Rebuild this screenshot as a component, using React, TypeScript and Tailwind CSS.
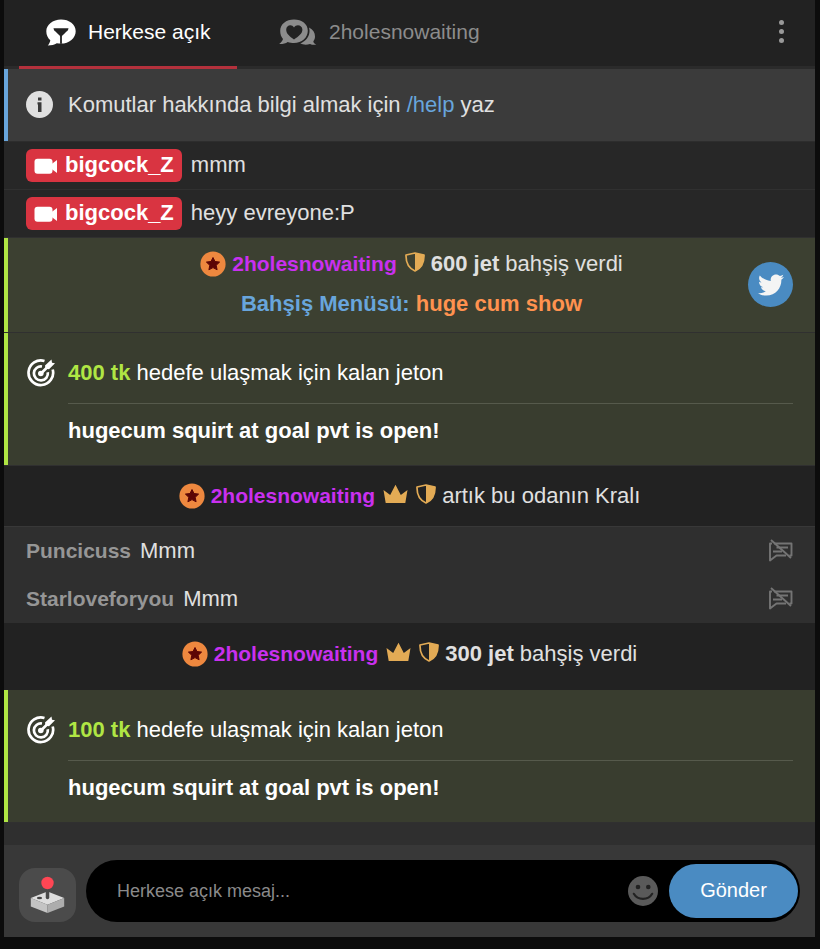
import React, { useState } from "react";
import { FaTwitter } from "react-icons/fa";

const USER = "2holesnowaiting";

function PublicIcon() {
  return (
    <svg viewBox="0 0 30 27" className="h-[27px] w-[30px] shrink-0" aria-hidden="true">
      <path
        fill="#fff"
        d="M15 .5C6.800.5.3 5.700.3 12.200c0 3.700 1.500 6.800 4 9-.2 1.700-1 3.500-2.500 5.300 3.700-.1 6.600-.9 9-2.300 1.300.3 2.800.4 4.200.4 8.200 0 14.700-5.500 14.700-12.400S23.200.5 15 .5Z"
      />
      <path fill="#222" d="M7.500 9.300h15c-.2 1.500-.8 2.500-2 3.300l-3 2.800c-.9.800-1.600 1.200-1.600 2.400v7h-1.800v-7c0-1.200-.7-1.600-1.600-2.400l-3-2.800c-1.200-.8-1.800-1.800-2-3.300Z" />
    </svg>
  );
}

function PrivateIcon() {
  return (
    <svg viewBox="0 0 38 27" className="h-[27px] w-[38px] shrink-0" fill="#8c8c8c" aria-hidden="true">
      <path
        fillRule="evenodd"
        d="M15 .5C7.200.5 1.200 5.200 1.200 11.800c0 3.500 1 6.200 2.800 8.200C3.500 21.800 2.300 23.500.2 25c3.200.2 6.300-.5 8.500-2 1.900.7 4.200 1 6.300 1 7.800 0 13.800-5.300 13.800-12.200S22.800.5 15 .5Zm0 20C10.500 17.500 7.200 14.500 7.200 10.800c0-4.800 5.600-6 7.800-2.300 2.200-3.700 8.400-2.500 8.400 2.300 0 3.700-3.800 6.700-8.400 9.700Z"
      />
      <path d="M30 8.500c4 2 6 5.200 6 9 0 2-.7 3.500-1.700 4.900.3 1.300 1.200 2.300 3 3.300-2.500.4-4.600.1-6.300-.8-3.300 1.200-7 .9-9.700-.4 5.500-2.300 9.200-6.900 9.200-12.400 0-1.200-.2-2.400-.5-3.600Z" />
    </svg>
  );
}

function InfoIcon() {
  return (
    <svg viewBox="0 0 28 28" className="size-7 shrink-0" aria-hidden="true">
      <circle cx="13.500" cy="13.500" r="13.500" fill="#e0e0e0" />
      <path fill="#3b3b3b" d="M12 6.500h3.500v3H12zM11.500 11.300h4V21H12v-7.500h-.5z" />
    </svg>
  );
}

function CameraIcon() {
  return (
    <svg viewBox="0 0 24 16" className="h-4 w-6 shrink-0" fill="#fff" aria-hidden="true">
      <rect x=".5" y=".8" width="18" height="15" rx="3" />
      <path d="M17 6.500 23 2v13l-6-4.500Z" />
    </svg>
  );
}

function StarBadge() {
  return (
    <svg viewBox="0 0 26 26" className="size-[26px] shrink-0" aria-hidden="true">
      <circle cx="13" cy="13" r="12.600" fill="#ee883f" />
      <path
        fill="#5c0505"
        stroke="#5c0505"
        strokeLinejoin="round"
        d="m13 6.500 2 4 4.600.6-3.400 3.200.9 4.500-4.100-2.200-4.100 2.200.9-4.500-3.400-3.200 4.600-.6Z"
      />
    </svg>
  );
}

function CrownIcon() {
  return (
    <svg viewBox="0 0 25 20" className="h-5 w-[25px] shrink-0" fill="#e3ab55" aria-hidden="true">
      <path d="M2.700 19 .5 6l6.700 5L12.500.8 17.800 11l6.700-5L22.300 19Z" />
    </svg>
  );
}

function ShieldIcon() {
  return (
    <svg viewBox="0 0 20 20" className="size-5 shrink-0" aria-hidden="true">
      <path
        fill="none"
        stroke="#e3ab55"
        strokeWidth="1.700"
        strokeLinejoin="round"
        d="M10 1 19 3c.2 7.500-2 13-9 16C3 16 .8 10.500 1 3Z"
      />
      <path fill="#e3ab55" d="m10 1 9 2c.2 7.500-2 13-9 16Z" />
    </svg>
  );
}

function GoalIcon() {
  return (
    <svg viewBox="0 0 28 28" className="size-7 shrink-0" fill="none" stroke="#fff" aria-hidden="true">
      <path strokeWidth="2.700" d="M17.500 2A12.300 12.300 0 1 0 25.700 10.500" />
      <path strokeWidth="2.700" d="M15 7.500a7 7 0 1 0 5.800 5.800" />
      <circle cx="13.800" cy="14.500" r="2.800" fill="#fff" stroke="none" />
      <path strokeWidth="2.600" d="M14 14.500 23 5.500" />
      <path fill="#fff" stroke="none" d="M18 6.500 24.500.5l.5 3.200 3 .5-6 6-3.500-.5Z" />
    </svg>
  );
}

function MutedIcon() {
  return (
    <svg
      viewBox="0 0 26 24"
      className="h-6 w-[26px] shrink-0"
      fill="none"
      stroke="#747474"
      strokeWidth="1.900"
      strokeLinejoin="round"
      aria-hidden="true"
    >
      <path d="M7 4.500h17.500V16.500H22.500M19 16.500H9.500L3 21.500V4.500h2M9.500 8.500H21M6 12.500h9" />
      <path d="M4 1 24 19" />
    </svg>
  );
}

function JoystickIcon() {
  return (
    <svg viewBox="0 0 36 38" className="h-[38px] w-9" aria-hidden="true">
      <path fill="#dedede" d="m17.500 15.500 16.700 6.500-16.700 6.800L.8 22Z" />
      <path fill="#c4c4c4" d="m.8 22 16.700 6.800V37L.8 30.500Z" />
      <path fill="#adadad" d="m34.200 22-16.700 6.800V37l16.700-6.500Z" />
      <ellipse cx="9.500" cy="22" rx="2.600" ry="1.300" fill="#444" />
      <path stroke="#4a4a4a" strokeWidth="3.500" strokeLinecap="round" d="M17.500 11v10.500" />
      <circle cx="17.500" cy="7" r="6.200" fill="#ff4654" />
    </svg>
  );
}

function SmileIcon() {
  return (
    <svg viewBox="0 0 30 30" className="size-[30px]" aria-hidden="true">
      <circle cx="15" cy="15" r="15" fill="#5a5a5a" />
      <circle cx="10" cy="11" r="2.300" fill="#222" />
      <circle cx="20.300" cy="11" r="2.300" fill="#222" />
      <path
        d="M5.800 17.800c4 6.800 14.400 6.800 18.400 0"
        fill="none"
        stroke="#222"
        strokeWidth="2.200"
        strokeLinecap="round"
      />
    </svg>
  );
}

function CamMessage({ name, text }: { name: string; text: string }) {
  return (
    <div className="flex h-12 items-center gap-[9px] border-b border-[#303030] bg-[#272727] px-[22px]">
      <span className="flex h-[33px] items-center gap-[7px] rounded-md bg-[#d93441] px-2 font-bold text-white">
        <CameraIcon />
        <span className="pb-0.5">{name}</span>
      </span>
      <span className="pb-0.5">{text}</span>
    </div>
  );
}

function GreyMessage({ name, text }: { name: string; text: string }) {
  return (
    <div className="flex h-12 items-center gap-[9px] px-[22px]">
      <span className="text-[21px] font-bold text-[#969696]">{name}</span>
      <span className="flex-1">{text}</span>
      <MutedIcon />
    </div>
  );
}

function UserLine({ king, children }: { king?: boolean; children: React.ReactNode }) {
  return (
    <div className="flex items-center justify-center gap-1.5">
      <StarBadge />
      <span className="text-[21px] font-bold text-[#c930ef]">{USER}</span>
      <span className="flex items-center gap-2 pb-1 pl-0.5">
        {king && <CrownIcon />}
        <ShieldIcon />
      </span>
      <span>{children}</span>
    </div>
  );
}

function Goal({ left }: { left: string }) {
  return (
    <div className="border-b border-[#303030]">
      <div className="flex gap-[13px] border-l-4 border-[#b0e644] bg-[#393d2f] pt-6 pr-[22px] pb-[18px] pl-[19px] text-white">
        <div className="pt-0.5">
          <GoalIcon />
        </div>
        <div className="flex-1">
          <p className="border-b border-[#565a4c] pb-[14px] leading-8">
            <b className="text-[#b0e644]">{left} tk</b> hedefe ulaşmak için kalan jeton
          </p>
          <p className="pt-[11px] font-bold leading-8">hugecum squirt at goal pvt is open!</p>
        </div>
      </div>
    </div>
  );
}

export default function App() {
  const [message, setMessage] = useState("");

  return (
    <div className="min-h-screen bg-[#0c0c0c] pr-[5px] pb-3 pl-1 font-['Liberation_Sans',Arial,sans-serif] text-[22px] leading-8 text-[#e0e0e0]">
      <div className="bg-[#2f2f2f]">
        <header className="flex border-b-[3px] border-[#2b2b2b] bg-[#222] pl-[15px] text-[21px]">
          <button className="-mb-[3px] flex h-[69px] w-[218px] items-center gap-3 border-b-[3px] border-[#b4313c] pb-0.5 pl-[27px] text-white">
            <PublicIcon />
            Herkese açık
          </button>
          <button className="flex h-[66px] items-center gap-3 pb-0.5 pl-[42px] text-[#8c8c8c]">
            <PrivateIcon />
            {USER}
          </button>
          <button aria-label="Menü" className="mr-[31px] ml-auto flex flex-col justify-center gap-1 pb-1">
            <span className="size-[5px] rounded-full bg-[#999]" />
            <span className="size-[5px] rounded-full bg-[#999]" />
            <span className="size-[5px] rounded-full bg-[#999]" />
          </button>
        </header>

        <main>
          <div className="border-b border-[#2d2d2d]">
            <div className="flex h-[72px] items-center gap-[14px] border-l-4 border-[#68a5dc] bg-[#3b3b3b] pl-[18px]">
              <InfoIcon />
              <p>
                Komutlar hakkında bilgi almak için{" "}
                <a href="#help" className="text-[#68a5dc]">
                  /help
                </a>{" "}
                yaz
              </p>
            </div>
          </div>

          <CamMessage name="bigcock_Z" text="mmm" />
          <CamMessage name="bigcock_Z" text="heyy evreyone:P" />

          <div className="relative border-b border-[#303030]">
            <div className="border-l-4 border-[#b0e644] bg-[#3c4031] pt-2.5 pb-3">
              <UserLine>
                <b>600 jet</b> bahşiş verdi
              </UserLine>
              <p className="pt-2 text-center font-bold text-[#68a5dc]">
                Bahşiş Menüsü: <span className="text-[#ff924f]">huge cum show</span>
              </p>
            </div>
            <button
              aria-label="Twitter"
              className="absolute top-6 right-[22px] flex size-[45px] items-center justify-center rounded-full bg-[#4a8bc2] text-[#f4f4f4]"
            >
              <FaTwitter className="size-[26px]" />
            </button>
          </div>

          <Goal left="400" />

          <div className="border-b border-[#383838] bg-[#222] py-[14px]">
            <UserLine king>artık bu odanın Kralı</UserLine>
          </div>

          <GreyMessage name="Puncicuss" text="Mmm" />
          <GreyMessage name="Starloveforyou" text="Mmm" />

          <div className="bg-[#222] pt-[15px] pb-5">
            <UserLine king>
              <b>300 jet</b> bahşiş verdi
            </UserLine>
          </div>

          <Goal left="100" />
        </main>

        <form
          onSubmit={(e) => e.preventDefault()}
          className="mt-[22px] flex items-center gap-2.5 bg-[#383838] p-[15px]"
        >
          <button
            type="button"
            aria-label="Oyunlar"
            className="mt-2 flex h-[54px] w-[57px] items-center justify-center rounded-2xl bg-[#4b4b4b]"
          >
            <JoystickIcon />
          </button>
          <div className="flex h-[62px] min-w-0 flex-1 items-center rounded-full bg-black p-[2px] pl-[31px]">
            <input
              aria-label="Herkese açık mesaj"
              placeholder="Herkese açık mesaj..."
              value={message}
              onChange={(e) => setMessage(e.target.value)}
              className="min-w-0 flex-1 bg-transparent text-lg outline-none placeholder:text-[#8a8a8a]"
            />
            <button type="button" aria-label="Emoji" className="mr-[11px]">
              <SmileIcon />
            </button>
            <button type="submit" className="h-[54px] w-[129px] rounded-full bg-[#4a8bc2] pb-0.5 text-xl text-white">
              Gönder
            </button>
          </div>
        </form>
      </div>
    </div>
  );
}
